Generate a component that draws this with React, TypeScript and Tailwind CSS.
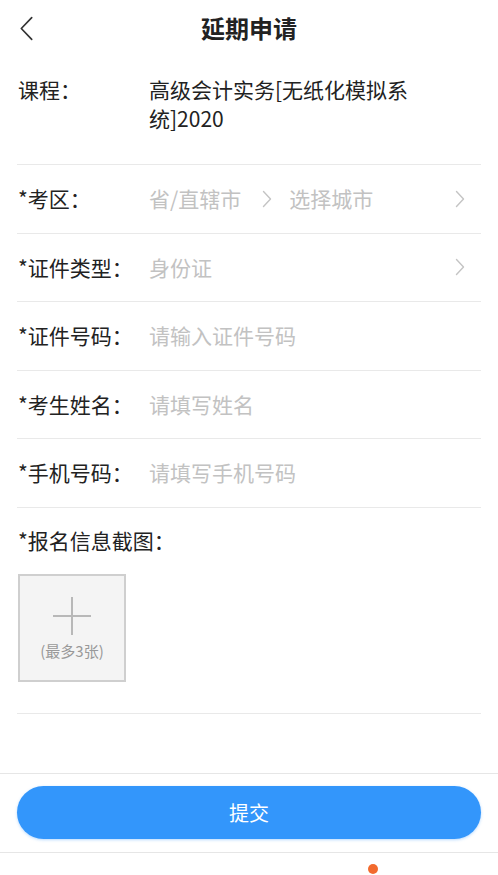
import React from 'react'

const font = { fontFamily: '"Noto Sans CJK SC", "Noto Sans", sans-serif' }

function Chevron({ className = '' }: { className?: string }) {
  return (
    <svg viewBox="0 0 10 18" className={className} fill="none">
      <polyline points="1.5,1.5 8.5,9 1.5,16.5" stroke="#c4c4c4" strokeWidth="1.4" strokeLinecap="round" strokeLinejoin="round" />
    </svg>
  )
}

function Row({ label, placeholder, arrow }: { label: string; placeholder: React.ReactNode; arrow?: boolean }) {
  return (
    <div className="flex h-[68.6px] items-center border-b border-[#e9e9e9] pl-px">
      <div className="w-[131px] shrink-0 text-[21px] text-[#222]">{label}</div>
      <div className="flex flex-1 items-center text-[21px] text-[#c2c2c2]">{placeholder}</div>
      {arrow && <Chevron className="mr-[16px] h-[18px] w-[10px]" />}
    </div>
  )
}

export default function App() {
  return (
    <div className="flex h-[875px] w-[498px] flex-col overflow-hidden bg-white" style={font}>
      {/* header */}
      <div className="relative flex h-[55px] shrink-0 items-center justify-center">
        <svg viewBox="0 0 14 24" className="absolute left-[19px] top-[16px] h-[25px] w-[15px]" fill="none">
          <polyline points="12,1.5 2,12 12,22.5" stroke="#333" strokeWidth="1.6" strokeLinecap="round" strokeLinejoin="round" />
        </svg>
        <h1 className="text-[24px] font-bold text-[#222]">延期申请</h1>
      </div>

      <div className="mx-[17px]">
        <div className="flex border-b border-[#e9e9e9] pb-[31px] pl-px pt-[20px]">
          <div className="w-[131px] shrink-0 text-[21px] leading-[29px] text-[#222]">课程：</div>
          <div className="w-[285px] text-[21px] leading-[29px] text-[#222]">高级会计实务[无纸化模拟系统]2020</div>
        </div>

        <Row
          label="*考区："
          arrow
          placeholder={
            <>
              <span>省/直辖市</span>
              <Chevron className="ml-[21px] mr-[17px] h-[18px] w-[10px]" />
              <span>选择城市</span>
            </>
          }
        />
        <Row label="*证件类型：" placeholder="身份证" arrow />
        <Row label="*证件号码：" placeholder="请输入证件号码" />
        <Row label="*考生姓名：" placeholder="请填写姓名" />
        <Row label="*手机号码：" placeholder="请填写手机号码" />

        <div className="border-b border-[#e9e9e9] pb-[31px] pl-px pt-[18px]">
          <div className="text-[21px] leading-[29px] text-[#222]">*报名信息截图：</div>
          <div className="mt-[19px] flex h-[108px] w-[108px] flex-col items-center border-2 border-[#cfcfcf] bg-[#f4f4f4]">
            <svg viewBox="0 0 40 40" className="mt-[20px] h-[40px] w-[40px]" fill="none">
              <line x1="20" y1="1" x2="20" y2="39" stroke="#b8b8b8" strokeWidth="2" />
              <line x1="1" y1="20" x2="39" y2="20" stroke="#b8b8b8" strokeWidth="2" />
            </svg>
            <div className="mt-[4px] text-[15px] text-[#999]">(最多3张)</div>
          </div>
        </div>
      </div>

      <div className="flex-1" />

      <div className="shrink-0 border-y border-[#e6e6e6] px-[17px] pb-[13px] pt-[12px]">
        <button className="flex h-[53px] w-full items-center justify-center rounded-full bg-[#3396fb] text-[20px] text-white shadow-[0_1px_3px_rgba(51,150,251,0.35)]">
          提交
        </button>
      </div>
      <div className="relative h-[22px] shrink-0">
        <div className="absolute left-[368px] top-[11px] h-[10px] w-[10px] rounded-full bg-[#f26a2e]" />
      </div>
    </div>
  )
}
